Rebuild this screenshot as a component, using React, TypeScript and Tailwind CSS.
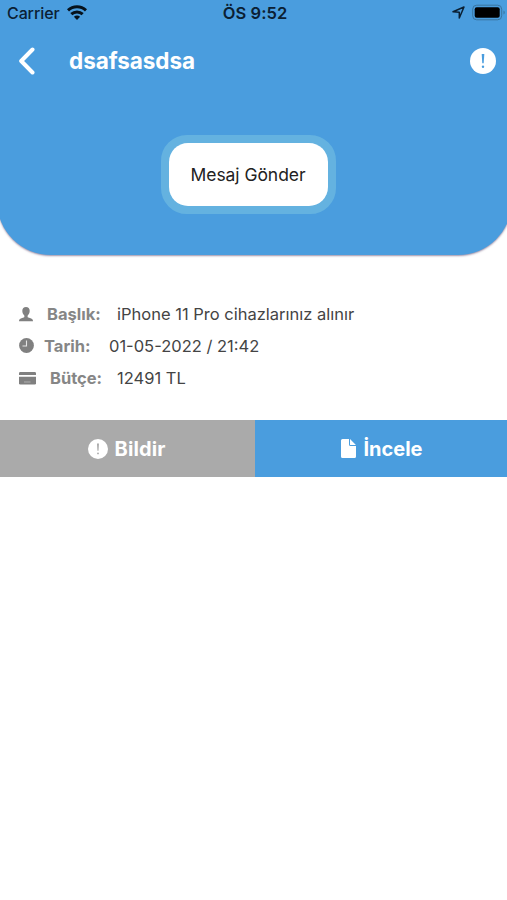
import React from 'react'

interface Detail {
    label: string;
    value: string;
    icon: React.ReactNode;
    labelClass: string;
}

const AlertIcon = ({ className, color }: { className: string, color: string }) => (
    <svg className={className} viewBox="0 0 26 26" fill="none">
        <circle cx="13" cy="13" r="13" fill="#fff" />
        <path d="M11.7 6h2.600l-.6 9.200h-1.400z" fill={color} />
        <circle cx="13" cy="18.700" r="1.200" fill={color} />
    </svg>
)

const WifiIcon = () => (
    <svg className="w-5 h-[15px]" viewBox="0 0 20 15" fill="none" stroke="#06121c" strokeWidth="3">
        <path d="M1 5.400C6 .6 14 .6 19 5.400" />
        <path d="M4.300 9.200C7.600 6.100 12.400 6.100 15.700 9.200" />
        <path d="M10 15 6.900 11.800C8.600 10.200 11.400 10.200 13.100 11.800z" fill="#06121c" stroke="none" />
    </svg>
)

const PersonIcon = () => (
    <svg className="w-[14px] h-[15px]" viewBox="0 0 14 15" fill="#808080">
        <path d="M7 0c2.300 0 3.700 1.500 3.700 3.800 0 1.900-.8 3.600-2 4.600-.3 1.100 0 2 .8 2.200l2.700.8c1.200.4 1.800 1.300 1.800 2.900H0c0-1.600.6-2.500 1.800-2.900l2.700-.8c.8-.2 1.100-1.100.8-2.200-1.200-1-2-2.700-2-4.600C3.300 1.500 4.700 0 7 0z" />
    </svg>
)

const ClockIcon = () => (
    <svg className="w-[15px] h-[15px] -translate-y-px" viewBox="0 0 15 15" fill="none">
        <circle cx="7.500" cy="7.500" r="7.400" fill="#808080" />
        <path d="M7.500 2.500v5.500H3.500" stroke="#e4e4e4" strokeWidth="1.100" />
    </svg>
)

const CardIcon = () => (
    <svg className="w-[17px] h-[13px]" viewBox="0 0 17 13" fill="#808080">
        <path d="M1.300 0h14.400A1.300 1.300 0 0 1 17 1.300V3H0V1.300A1.300 1.300 0 0 1 1.300 0z" />
        <path d="M0 4.800h17v6.400a1.300 1.300 0 0 1-1.300 1.300H1.300A1.300 1.300 0 0 1 0 11.200z" />
        <path d="M5 10h6.500" stroke="#b4b4b4" strokeWidth=".9" />
    </svg>
)

const details: Detail[] = [
    { label: 'Başlık:', value: 'iPhone 11 Pro cihazlarınız alınır', icon: <PersonIcon />, labelClass: 'ml-[14px] w-[70px]' },
    { label: 'Tarih:', value: '01-05-2022 / 21:42', icon: <ClockIcon />, labelClass: 'ml-[10px] w-[65px]' },
    { label: 'Bütçe:', value: '12491 TL', icon: <CardIcon />, labelClass: 'ml-[14px] w-[67px]' },
]

const App = () => {
    return (
        <main className="w-full h-[900px] overflow-hidden bg-white font-['Inter',sans-serif]">
            <header className="h-[255px] -ml-[3px] -mr-[5px] pl-[3px] pr-[5px] bg-[#4a9dde] rounded-b-[54px] shadow-[0_1px_2px_rgba(90,70,110,0.6)]">
                <div className="h-[25px] flex justify-between text-[#0b2033]">
                    <div className="flex items-center w-[200px] pl-[7px] gap-[7px]">
                        <span className="text-[16px] font-medium tracking-[-0.1px]">Carrier</span>
                        <WifiIcon />
                    </div>
                    <span className="pl-[3px] text-[16.500px] leading-[26px] font-semibold tracking-[0.1px]">ÖS 9:52</span>
                    <div className="w-[200px] flex items-center justify-end gap-[7px]">
                        <svg className="w-[13px] h-[13px]" viewBox="0 0 13 13" fill="none" stroke="#0b2033" strokeWidth="1.500" strokeLinejoin="round">
                            <path d="M12 1 7.300 12V6.300L1 5.800z" />
                        </svg>
                        <svg className="w-[35px] h-[17px]" viewBox="0 0 35 17" fill="none">
                            <rect x=".7" y="1.200" width="29" height="14.600" rx="4" stroke="#39749f" />
                            <rect x="2.700" y="3.200" width="25" height="10.600" rx="2" fill="#000" />
                            <path d="M31.500 6.500c1.700.8 1.700 3.200 0 4z" fill="#39749f" />
                        </svg>
                    </div>
                </div>

                <nav className="h-[71px] flex items-center pl-[18px] pr-[11px]">
                    <svg className="w-[18px] h-[28px]" viewBox="0 0 18 28" fill="none" stroke="#fff" strokeWidth="4" strokeLinecap="round" strokeLinejoin="round">
                        <path d="M14.500 2.500 3.200 14l11.300 11.500" />
                    </svg>
                    <h1 className="ml-[33px] text-[22.500px] font-bold tracking-[-0.05px] text-white">dsafsasdsa</h1>
                    <AlertIcon className="ml-auto w-[26px] h-[26px]" color="#4a9dde" />
                </nav>

                <div className="flex pl-[161px] pt-[39px]">
                    <button className="w-[175px] h-[79px] rounded-[26px] border-8 border-[#64b2e0] bg-[#64b2e0]">
                        <span className="flex h-full items-center justify-center rounded-[19px] bg-white pr-px pt-px text-[17.500px] tracking-[-0.05px] text-[#222]">Mesaj Gönder</span>
                    </button>
                </div>
            </header>

            <section className="pt-[43px] pl-[19px] h-[165px]">
                {details.map((detail) => (
                    <div key={detail.label} className="h-8 flex items-center text-[16.500px]">
                        {detail.icon}
                        <span className={`shrink-0 font-bold text-[#868686] ${detail.labelClass}`}>{detail.label}</span>
                        <span className="whitespace-nowrap text-[#444]">{detail.value}</span>
                    </div>
                ))}
            </section>

            <div className="flex h-[57px] text-white text-[20px] font-bold">
                <button className="w-[255px] flex items-center justify-center gap-[7px] pr-[2px] bg-[#aaaaaa]">
                    <AlertIcon className="w-5 h-5" color="#aaaaaa" />
                    <span className="tracking-[0.1px]">Bildir</span>
                </button>
                <button className="flex-1 flex items-center justify-center gap-[7px] pl-[2px] bg-[#4a9dde]">
                    <svg className="w-[15px] h-[19px]" viewBox="0 0 15 19" fill="#fff">
                        <path d="M1.500 0H8v5.500A1.500 1.500 0 0 0 9.500 7H15v10.500a1.500 1.500 0 0 1-1.500 1.500h-12A1.500 1.500 0 0 1 0 17.500v-16A1.500 1.500 0 0 1 1.500 0z" />
                        <path d="M9 .1 14.900 6H9.600a.6.6 0 0 1-.6-.6z" />
                    </svg>
                    <span>İncele</span>
                </button>
            </div>
        </main>
    )
}

export default App
